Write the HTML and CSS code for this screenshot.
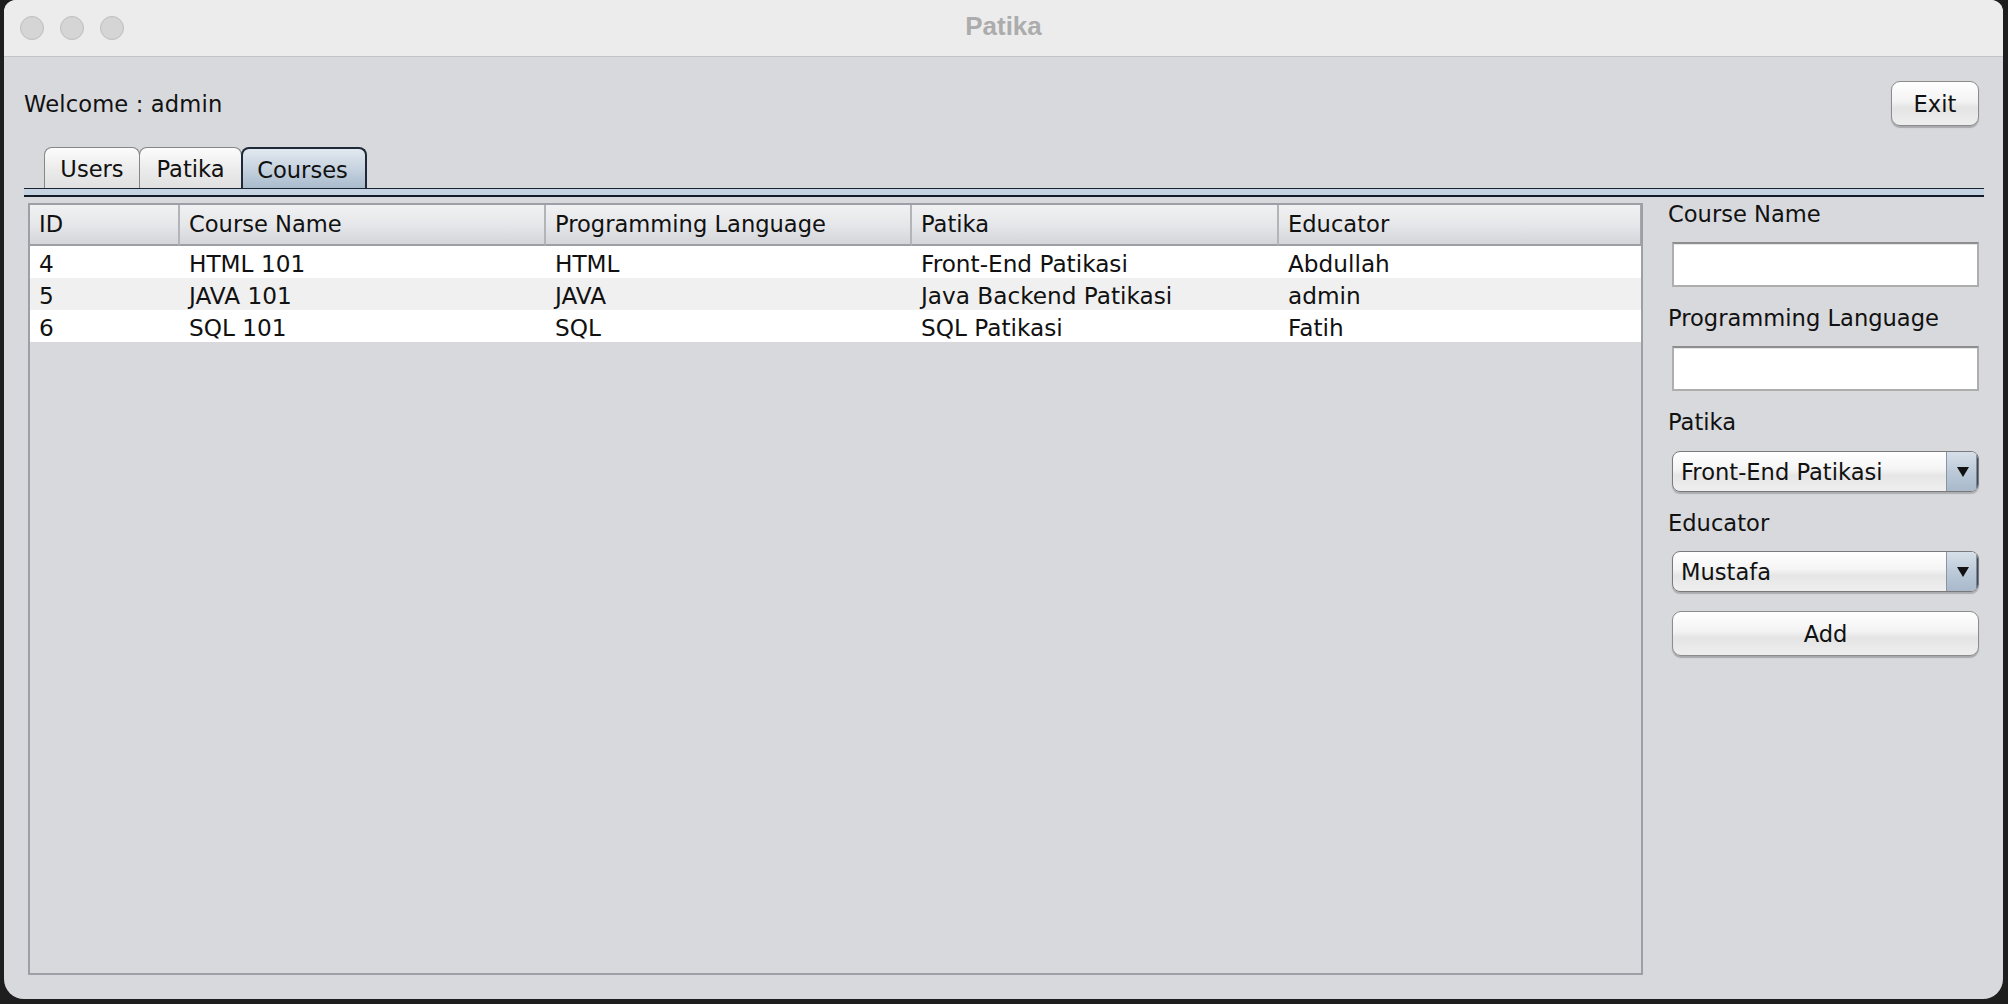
FILE: index.html
```html
<!DOCTYPE html>
<html lang="en">
<head>
<meta charset="utf-8">
<title>Patika</title>
<link rel="stylesheet" href="styles.css">
</head>
<body>
<div class="window">
  <div class="titlebar">
    <div class="lights"><span class="light"></span><span class="light"></span><span class="light"></span></div>
    <div class="title">Patika</div>
    <div></div>
  </div>
  <div class="content">
    <div class="topbar">
      <span class="welcome">Welcome : admin</span>
      <button class="btn exit">Exit</button>
    </div>
    <div class="tabpane">
      <div class="tabs">
        <div class="tab tab-users">Users</div>
        <div class="tab tab-patika">Patika</div>
        <div class="tab tab-courses active">Courses</div>
      </div>
      <div class="band"></div>
      <div class="body">
        <div class="tablewrap">
          <table class="grid">
            <colgroup>
              <col class="c-id"><col class="c-wide"><col class="c-wide"><col class="c-wide3"><col>
            </colgroup>
            <thead>
              <tr><th>ID</th><th>Course Name</th><th>Programming Language</th><th>Patika</th><th class="last">Educator</th></tr>
            </thead>
            <tbody>
              <tr class="odd"><td>4</td><td>HTML 101</td><td>HTML</td><td>Front-End Patikasi</td><td>Abdullah</td></tr>
              <tr class="even"><td>5</td><td>JAVA 101</td><td>JAVA</td><td>Java Backend Patikasi</td><td>admin</td></tr>
              <tr class="odd"><td>6</td><td>SQL 101</td><td>SQL</td><td>SQL Patikasi</td><td>Fatih</td></tr>
            </tbody>
          </table>
        </div>
        <div class="form">
          <div class="label">Course Name</div>
          <div class="field f1"></div>
          <div class="label l2">Programming Language</div>
          <div class="field f2"></div>
          <div class="label l3">Patika</div>
          <div class="combo c1"><span class="combo-text">Front-End Patikasi</span><span class="arrow"><span class="tri"></span></span></div>
          <div class="label l4">Educator</div>
          <div class="combo c2"><span class="combo-text">Mustafa</span><span class="arrow"><span class="tri"></span></span></div>
          <button class="btn add">Add</button>
        </div>
      </div>
    </div>
  </div>
</div>
</body>
</html>
```
FILE: styles.css
```css
html, body {
  margin: 0;
  padding: 0;
}
body {
  background: #1e1e1e;
  width: 2008px;
  height: 1004px;
  overflow: hidden;
  font-family: "DejaVu Sans", sans-serif;
  font-size: 22.6px;
  color: #111;
}
.window {
  margin-left: 4px;
  width: 1999px;
  height: 999px;
  background: #d8d9dd;
  border-radius: 12px 12px 20px 20px;
  overflow: hidden;
  display: flex;
  flex-direction: column;
}
.titlebar {
  flex: none;
  height: 56px;
  background: #ececec;
  border-bottom: 1px solid #c3c3c5;
  display: grid;
  grid-template-columns: 1fr auto 1fr;
  align-items: center;
}
.lights {
  display: flex;
  gap: 16px;
  padding-left: 16px;
}
.light {
  width: 22px;
  height: 22px;
  border-radius: 50%;
  background: #d5d5d5;
  border: 1px solid #bdbdbd;
}
.title {
  font-family: "Liberation Sans", Arial, sans-serif;
  font-weight: bold;
  font-size: 26px;
  color: #acacac;
  padding-bottom: 3px;
}
.content {
  flex: 1;
  display: flex;
  flex-direction: column;
  padding: 24px 19px 24px 20px;
}
.topbar {
  display: flex;
  justify-content: space-between;
  align-items: center;
  height: 45px;
  padding-right: 5px;
}
.welcome {
  letter-spacing: 0.15px;
}
.btn {
  font: inherit;
  color: #111;
  height: 45px;
  box-sizing: border-box;
  border: 1.5px solid #8c8c8c;
  border-radius: 9px;
  background: linear-gradient(#ffffff, #f3f3f3 45%, #e4e4e4 60%, #eeeeee);
  box-shadow: 0 1.5px 1px rgba(0, 0, 0, 0.22);
  padding: 0;
}
.exit {
  width: 88px;
}
.tabpane {
  margin-top: 21px;
  flex: 1;
  display: flex;
  flex-direction: column;
}
.tabs {
  display: flex;
  height: 41px;
  padding-left: 20px;
}
.tab {
  box-sizing: border-box;
  display: flex;
  align-items: center;
  justify-content: center;
  border: 1.5px solid #868686;
  border-bottom: none;
  border-radius: 8px 8px 0 0;
  background: linear-gradient(#fcfcfc, #ebebeb 55%, #e0e0e0);
  margin-right: -1px;
  padding-top: 2px;
}
.tab-users { width: 96px; }
.tab-patika { width: 103px; }
.tab-courses { width: 126px; padding-right: 3px; }
.tab.active {
  background: linear-gradient(#e2e9f0, #c7d3df 50%, #a9bbcd);
  border-color: #1f2939;
  border-width: 2px;
}
.band {
  flex: none;
  height: 6px;
  background: #c5d3e2;
  border-top: 1px solid #1b2331;
  border-bottom: 2px solid #141b28;
}
.body {
  flex: 1;
  display: flex;
  gap: 25px;
  padding: 6px 5px 0 4px;
}
.tablewrap {
  flex: 1;
  border: 2px solid #9c9fa6;
  background: #d8d9dd;
}
.grid {
  width: 100%;
  table-layout: fixed;
  border-collapse: separate;
  border-spacing: 0;
}
.c-id { width: 150px; }
.c-wide { width: 366px; }
.c-wide3 { width: 367px; }
.grid th {
  box-sizing: border-box;
  height: 41px;
  padding: 0 0 2px 9px;
  text-align: left;
  font-weight: normal;
  white-space: nowrap;
  background: linear-gradient(#f1f1f3, #e6e7ea 50%, #d4d5d9);
  border-bottom: 2px solid #9d9fa5;
  border-right: 2px solid #b2b4b9;
}
.grid th.last {
  border-right: 1px solid #a5a7ac;
}
.grid td {
  box-sizing: border-box;
  height: 32px;
  padding: 2px 0 0 9px;
  font-size: 23.2px;
  white-space: nowrap;
  overflow: hidden;
}
.grid tr.odd td { background: #ffffff; }
.grid tr.even td { background: #f0f0f0; }
.form {
  width: 311px;
  flex: none;
  display: flex;
  flex-direction: column;
}
.label {
  height: 22px;
  line-height: 22px;
  white-space: nowrap;
}
.field {
  margin: 17px 0 0 4px;
  height: 45px;
  box-sizing: border-box;
  background: #fff;
  border: 2px solid #aeaeae;
  border-top-color: #8e8e8e;
  box-shadow: inset 0 1px 0 #e6e6e6;
}
.l2, .l3, .l4 { margin-top: 20px; }
.combo {
  margin: 18px 0 0 4px;
  height: 41px;
  box-sizing: border-box;
  display: flex;
  border: 1.5px solid #7a7a7a;
  border-radius: 8px;
  background: linear-gradient(#ffffff, #f4f4f4 45%, #e6e6e6 60%, #efefef);
  box-shadow: 0 1.5px 1px rgba(0, 0, 0, 0.2);
  overflow: hidden;
}
.c2 { margin-top: 17px; }
.combo-text {
  flex: 1;
  display: flex;
  align-items: center;
  padding-left: 8px;
  white-space: nowrap;
}
.arrow {
  width: 31px;
  display: flex;
  align-items: center;
  justify-content: center;
  border-left: 1px solid #8a94a2;
  background: linear-gradient(#d7e0e9, #bccad8 50%, #a9b9cb);
  box-shadow: inset -1.5px 0 0 #3c4759;
}
.tri {
  width: 0;
  height: 0;
  border-left: 6px solid transparent;
  border-right: 6px solid transparent;
  border-top: 10px solid #111;
  margin-top: 1px;
}
.add {
  margin: 19px 0 0 4px;
  width: auto;
}
```
